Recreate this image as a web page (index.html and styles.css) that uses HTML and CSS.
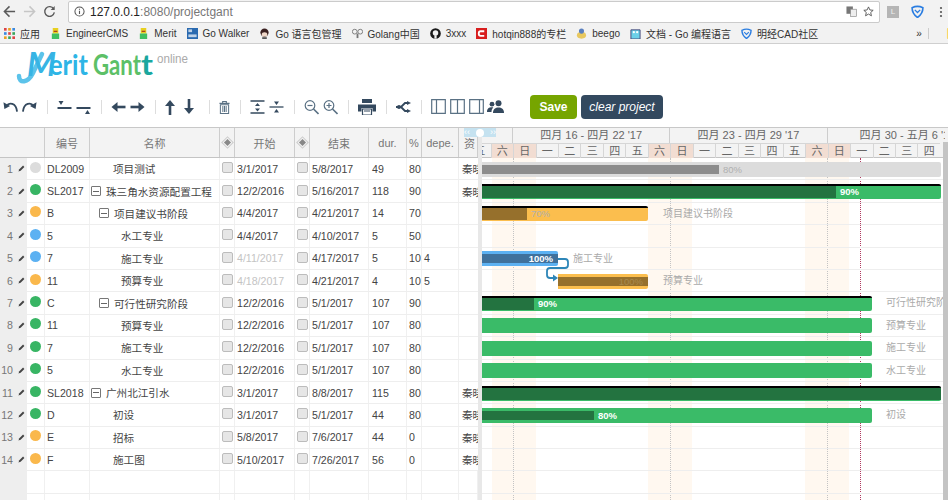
FILE: index.html
```html
<!DOCTYPE html>
<html>
<head>
    <meta charset="utf-8">
    <meta name="viewport" content="width=device-width, initial-scale=1">
    <title>Project Gantt</title>
    <link rel="stylesheet" href="styles.css">
</head>
<body>
    <svg class="sprite">
        <symbol id="pencil" viewBox="0 0 8 8"><path d="M0.5 7.5l1-2.6L5.8 0.7l1.5 1.5L3 6.5z" fill="#444"/></symbol>
    </svg>

    <header class="chrome">
        <div class="nav-bar">
            <svg class="nav-icon" viewBox="0 0 14 14"><path d="M13 7H2M7 1.5L1.5 7 7 12.5" fill="none" stroke="#5a5a5a" stroke-width="1.6"/></svg>
            <svg class="nav-icon" viewBox="0 0 14 14"><path d="M1 7h11M7 1.5L12.5 7 7 12.5" fill="none" stroke="#c6c6c6" stroke-width="1.6"/></svg>
            <svg class="nav-icon" viewBox="0 0 14 14"><path d="M11.5 4.2A5.2 5.2 0 1 0 12.2 8" fill="none" stroke="#5a5a5a" stroke-width="1.5"/><path d="M12.6 1v4.4H8.2z" fill="#5a5a5a"/></svg>
            <div class="omnibox">
                <svg class="info-icon" viewBox="0 0 12 12"><circle cx="6" cy="6" r="5" fill="none" stroke="#555" stroke-width="1.1"/><path d="M6 5.2v3.6M6 3v1.2" stroke="#555" stroke-width="1.2"/></svg>
                <span class="url"><b>127.0.0.1</b>:8080/projectgant</span>
                <svg class="translate-icon" viewBox="0 0 12 12"><rect x="0.5" y="0.5" width="7" height="8" fill="#777"/><rect x="5" y="3.5" width="6.5" height="8" fill="#eee" stroke="#888" stroke-width="0.7"/></svg>
                <svg class="star-icon" viewBox="0 0 12 12"><path d="M6 1l1.5 3.3 3.6.4-2.7 2.4.8 3.6L6 8.8l-3.2 1.9.8-3.6L.9 4.7l3.6-.4z" fill="none" stroke="#555" stroke-width="1"/></svg>
            </div>
            <span class="ext-l">L</span>
            <svg class="ext-shield" viewBox="0 0 12 12"><path d="M1 2.5Q6 0 11 2.5 11 8 6 11.5 1 8 1 2.5z" fill="none" stroke="#2a7de1" stroke-width="1.5"/><path d="M3.5 4.5L6 7l2.5-2.5" fill="none" stroke="#2a7de1" stroke-width="1.2"/></svg>
            <svg class="ext-dots" viewBox="0 0 4 12"><circle cx="2" cy="2" r="1.1" fill="#555"/><circle cx="2" cy="6" r="1.1" fill="#555"/><circle cx="2" cy="10" r="1.1" fill="#555"/></svg>
        </div>
        <nav class="bookmarks">
            <a class="bm bm-apps"><svg viewBox="0 0 10 10"><g fill="#d44"><rect width="2.4" height="2.4"/><rect x="3.8" fill="#e8a020" width="2.4" height="2.4"/><rect x="7.6" fill="#3a8ae0" width="2.4" height="2.4"/><rect y="3.8" fill="#3a8ae0" width="2.4" height="2.4"/><rect x="3.8" y="3.8" width="2.4" height="2.4"/><rect x="7.6" y="3.8" fill="#3aa55a" width="2.4" height="2.4"/><rect y="7.6" fill="#e8a020" width="2.4" height="2.4"/><rect x="3.8" y="7.6" fill="#3aa55a" width="2.4" height="2.4"/><rect x="7.6" y="7.6" width="2.4" height="2.4"/></g></svg>应用</a>
            <a class="bm bm-engineer"><svg viewBox="0 0 10 12"><rect x="2" y="0" width="6" height="6" fill="#e8d020"/><rect x="1" y="6" width="8" height="6" fill="#40c060"/><rect x="3" y="3" width="4" height="1.2" fill="#a03020"/></svg>EngineerCMS</a>
            <a class="bm bm-merit"><svg viewBox="0 0 10 12"><rect x="2" y="0" width="6" height="6" fill="#e8d020"/><rect x="1" y="6" width="8" height="6" fill="#40c060"/><rect x="3" y="3" width="4" height="1.2" fill="#a03020"/></svg>Merit</a>
            <a class="bm bm-walker"><svg viewBox="0 0 12 12"><rect width="12" height="12" fill="#2a6ab0"/><rect x="1.5" y="1.5" width="4" height="3" fill="#fff" opacity=".7"/><rect x="1.5" y="7" width="9" height="3" fill="#fff" opacity=".7"/></svg>Go Walker</a>
            <a class="bm bm-pkg"><svg viewBox="0 0 12 12"><circle cx="6" cy="5" r="4.5" fill="#3a2020"/><ellipse cx="6" cy="7" rx="3" ry="2.4" fill="#f0d8c8"/><rect x="3.5" y="10" width="5" height="2" fill="#555"/></svg>Go 语言包管理</a>
            <a class="bm bm-golang"><svg viewBox="0 0 12 12"><circle cx="3" cy="4" r="2.6" fill="none" stroke="#777"/><circle cx="9" cy="4" r="2.6" fill="none" stroke="#777"/><path d="M6 6v5" stroke="#777" stroke-width="2"/></svg>Golang中国</a>
            <a class="bm bm-gh"><svg viewBox="0 0 12 12"><circle cx="6" cy="6" r="5.8" fill="#1a1a1a"/><circle cx="6" cy="5.4" r="3" fill="#f2f2f2"/><rect x="4.8" y="8" width="2.4" height="3.6" fill="#f2f2f2"/></svg>3xxx</a>
            <a class="bm bm-csdn"><svg viewBox="0 0 12 12"><rect width="12" height="12" fill="#d81e1e"/><path d="M9 3.5H5Q3 3.5 3 6T5 8.5H9" fill="none" stroke="#fff" stroke-width="2"/></svg>hotqin888的专栏</a>
            <a class="bm bm-beego"><svg viewBox="0 0 12 12"><ellipse cx="6" cy="8" rx="5" ry="3.6" fill="#e8c860"/><circle cx="6" cy="3.4" r="2.8" fill="#5a80c0"/></svg>beego</a>
            <a class="bm bm-doc"><svg viewBox="0 0 12 12"><path d="M1 2h10v10H1z" fill="#6cd0e8" stroke="#447"/><circle cx="4.2" cy="4.6" r="1.2" fill="#fff"/><circle cx="7.8" cy="4.6" r="1.2" fill="#fff"/></svg>文档 - Go 编程语言</a>
            <a class="bm bm-cad"><svg viewBox="0 0 12 12"><path d="M1 2.5Q6 0 11 2.5 11 8 6 11.5 1 8 1 2.5z" fill="none" stroke="#2a7de1" stroke-width="1.5"/><path d="M3.5 4.5L6 7l2.5-2.5" fill="none" stroke="#2a7de1" stroke-width="1.2"/></svg>明经CAD社区</a>
            <span class="bm-more">»</span>
            <a class="bm bm-other"><svg viewBox="0 0 10 12"><rect width="10" height="12" rx="1" fill="#f8d868"/></svg>其他书签</a>
        </nav>
    </header>

    <div class="logo">
        <svg viewBox="0 0 180 40" width="180" height="40">
            <path d="M3 30C3 38 12 37 17 27L26 8" fill="none" stroke="#5cc3ea" stroke-width="4.5" stroke-linecap="round"/>
            <text class="logo-m" x="11" y="30">M</text>
            <text class="logo-merit" x="33" y="29" textLength="39" lengthAdjust="spacingAndGlyphs">erit</text>
            <text class="logo-gantt" x="77" y="29" textLength="48" lengthAdjust="spacingAndGlyphs">Gant</text>
            <text class="logo-t" x="125" y="29" textLength="12" lengthAdjust="spacingAndGlyphs">t</text>
            <text class="logo-online" x="141" y="17" textLength="31" lengthAdjust="spacingAndGlyphs">online</text>
        </svg>
    </div>

    <div class="toolbar">
        <svg class="tool" viewBox="0 0 16 16"><path d="M4 7C6 3 14 3 15 13" fill="none" stroke="#34495e" stroke-width="2"/><path d="M0.5 3l1 7 6-3z" fill="#34495e"/></svg>
        <svg class="tool" viewBox="0 0 16 16"><path d="M12 7C10 3 2 3 1 13" fill="none" stroke="#34495e" stroke-width="2"/><path d="M15.5 3l-1 7-6-3z" fill="#34495e"/></svg>
        <span class="sep"></span>
        <svg class="tool" viewBox="0 0 14 16"><path d="M0 9h14" stroke="#34495e" stroke-width="2"/><path d="M1 2h5L3.500 6z" fill="#34495e"/></svg>
        <svg class="tool" viewBox="0 0 14 16"><path d="M0 9h14" stroke="#34495e" stroke-width="2"/><path d="M8.500 15h5L11 11z" fill="#34495e"/></svg>
        <span class="sep"></span>
        <svg class="tool" viewBox="0 0 14 16"><path d="M14 8H5" stroke="#34495e" stroke-width="2.600"/><path d="M6 3L0 8l6 5z" fill="#34495e"/></svg>
        <svg class="tool" viewBox="0 0 14 16"><path d="M0 8h9" stroke="#34495e" stroke-width="2.600"/><path d="M8 3l6 5-6 5z" fill="#34495e"/></svg>
        <span class="sep"></span>
        <svg class="tool tool-v" viewBox="0 0 10 16"><path d="M5 16V6" stroke="#34495e" stroke-width="2.600"/><path d="M0 7l5-6 5 6z" fill="#34495e"/></svg>
        <svg class="tool tool-v" viewBox="0 0 10 16"><path d="M5 0v10" stroke="#34495e" stroke-width="2.600"/><path d="M0 9l5 6 5-6z" fill="#34495e"/></svg>
        <span class="sep"></span>
        <svg class="tool tool-trash" viewBox="0 0 12 14"><path d="M0.500 3h11M4 3V1h4v2" fill="none" stroke="#5a7184" stroke-width="1.200"/><path d="M1.500 4.500h9V14h-9zM4.200 6v6.500M6 6v6.500M7.800 6v6.500" fill="none" stroke="#5a7184" stroke-width="1.100"/></svg>
        <span class="sep"></span>
        <svg class="tool" viewBox="0 0 14 16"><path d="M0 2h14M0 14h14" stroke="#34495e" stroke-width="1.300"/><path d="M4.500 7L7 4l2.500 3zM4.500 9.500L7 12.500 9.500 9.500z" fill="#34495e"/></svg>
        <svg class="tool" viewBox="0 0 14 16"><path d="M0 8h14" stroke="#34495e" stroke-width="1.300"/><path d="M4.500 2.500L7 6 9.500 2.500zM4.500 13.500L7 10l2.500 3.500z" fill="#34495e"/></svg>
        <span class="sep"></span>
        <svg class="tool" viewBox="0 0 15 16"><circle cx="6" cy="6.500" r="4.800" fill="none" stroke="#5a7184" stroke-width="1.200"/><path d="M3.500 6.500h5" stroke="#5a7184" stroke-width="1.200"/><path d="M9.500 10l5 5" stroke="#5a7184" stroke-width="1.600"/></svg>
        <svg class="tool" viewBox="0 0 15 16"><circle cx="6" cy="6.500" r="4.800" fill="none" stroke="#5a7184" stroke-width="1.200"/><path d="M3.500 6.500h5M6 4v5" stroke="#5a7184" stroke-width="1.200"/><path d="M9.500 10l5 5" stroke="#5a7184" stroke-width="1.600"/></svg>
        <span class="sep"></span>
        <svg class="tool tool-print" viewBox="0 0 18 16"><path d="M4 0h10v4H4z" fill="#34495e"/><path d="M0 5.500h18v7h-3.500V9h-11v3.500H0z" fill="#34495e"/><path d="M4.500 10h9v6h-9zM6 12h6" fill="none" stroke="#34495e" stroke-width="1.200"/></svg>
        <span class="sep"></span>
        <svg class="tool tool-link" viewBox="0 0 15 12"><path d="M0 6h5l4-4h3M5 6l4 4h3" fill="none" stroke="#34495e" stroke-width="1.800"/><path d="M11 0l4 2-4 2zM11 8l4 2-4 2z" fill="#34495e"/><circle cx="3" cy="6" r="2" fill="#34495e"/></svg>
        <span class="sep"></span>
        <svg class="tool tool-view" viewBox="0 0 15 15"><path d="M.7.7h13.600v13.600H.700zM5.500.7v13.600" fill="none" stroke="#5a7184" stroke-width="1.200"/></svg>
        <svg class="tool tool-view" viewBox="0 0 15 15"><path d="M.7.7h13.600v13.600H.700zM7.500.7v13.600" fill="none" stroke="#5a7184" stroke-width="1.200"/></svg>
        <svg class="tool tool-view tool-view-last" viewBox="0 0 15 15"><path d="M.7.7h13.600v13.600H.700zM10.500.7v13.600" fill="none" stroke="#5a7184" stroke-width="1.200"/></svg>
        <svg class="tool tool-people" viewBox="0 0 17 13"><circle cx="11.500" cy="3.200" r="3" fill="#34495e"/><path d="M6 13c0-4 2.500-5.500 5.500-5.500S17 9 17 13z" fill="#34495e"/><circle cx="5" cy="4.200" r="2.400" fill="#34495e"/><path d="M0 12c0-3.500 2-4.800 5-4.800 .5 0 1 0 1.300 .2C5 8.500 4.500 10 4.500 12z" fill="#34495e"/></svg>
        <button class="btn btn-save">Save</button>
        <button class="btn btn-clear">clear project</button>
    </div>

    <main class="gantt">
        <section class="grid-panel">
            <div class="grid-row grid-head">
                <div class="cell head-index"></div><div class="cell"></div>
                <div class="cell">编号</div><div class="cell">名称</div><div class="cell"><span class="head-diamond"></span></div>
                <div class="cell">开始</div><div class="cell"><span class="head-diamond"></span></div><div class="cell">结束</div>
                <div class="cell">dur.</div><div class="cell">%</div><div class="cell">depe.</div><div class="cell head-res">资</div>
            </div>

            <div class="grid-row"><div class="cell num"><span>1</span><svg class="pencil"><use href="#pencil"/></svg></div><div class="cell"><i class="dot dot-grey"></i></div><div class="cell code">DL2009</div><div class="cell name ind-2">项目测试</div><div class="cell"><i class="check"></i></div><div class="cell date">3/1/2017</div><div class="cell"><i class="check"></i></div><div class="cell date">5/8/2017</div><div class="cell dur">49</div><div class="cell pct">80</div><div class="cell dep"></div><div class="cell res">秦晓</div></div>
            <div class="grid-row"><div class="cell num"><span>2</span><svg class="pencil"><use href="#pencil"/></svg></div><div class="cell"><i class="dot dot-green"></i></div><div class="cell code">SL2017</div><div class="cell name ind-0"><i class="toggle"></i>珠三角水资源配置工程</div><div class="cell"><i class="check"></i></div><div class="cell date">12/2/2016</div><div class="cell"><i class="check"></i></div><div class="cell date">5/16/2017</div><div class="cell dur">118</div><div class="cell pct">90</div><div class="cell dep"></div><div class="cell res">秦晓</div></div>
            <div class="grid-row"><div class="cell num"><span>3</span><svg class="pencil"><use href="#pencil"/></svg></div><div class="cell"><i class="dot dot-orange"></i></div><div class="cell code">B</div><div class="cell name ind-1"><i class="toggle"></i>项目建议书阶段</div><div class="cell"><i class="check"></i></div><div class="cell date">4/4/2017</div><div class="cell"><i class="check"></i></div><div class="cell date">4/21/2017</div><div class="cell dur">14</div><div class="cell pct">70</div><div class="cell dep"></div><div class="cell res"></div></div>
            <div class="grid-row"><div class="cell num"><span>4</span><svg class="pencil"><use href="#pencil"/></svg></div><div class="cell"><i class="dot dot-blue"></i></div><div class="cell code">5</div><div class="cell name ind-3">水工专业</div><div class="cell"><i class="check"></i></div><div class="cell date">4/4/2017</div><div class="cell"><i class="check"></i></div><div class="cell date">4/10/2017</div><div class="cell dur">5</div><div class="cell pct">50</div><div class="cell dep"></div><div class="cell res"></div></div>
            <div class="grid-row"><div class="cell num"><span>5</span><svg class="pencil"><use href="#pencil"/></svg></div><div class="cell"><i class="dot dot-blue"></i></div><div class="cell code">7</div><div class="cell name ind-3">施工专业</div><div class="cell"><i class="check"></i></div><div class="cell date date-auto">4/11/2017</div><div class="cell"><i class="check"></i></div><div class="cell date">4/17/2017</div><div class="cell dur">5</div><div class="cell pct">10</div><div class="cell dep">4</div><div class="cell res"></div></div>
            <div class="grid-row"><div class="cell num"><span>6</span><svg class="pencil"><use href="#pencil"/></svg></div><div class="cell"><i class="dot dot-orange"></i></div><div class="cell code">11</div><div class="cell name ind-3">预算专业</div><div class="cell"><i class="check"></i></div><div class="cell date date-auto">4/18/2017</div><div class="cell"><i class="check"></i></div><div class="cell date">4/21/2017</div><div class="cell dur">4</div><div class="cell pct">10</div><div class="cell dep">5</div><div class="cell res"></div></div>
            <div class="grid-row"><div class="cell num"><span>7</span><svg class="pencil"><use href="#pencil"/></svg></div><div class="cell"><i class="dot dot-green"></i></div><div class="cell code">C</div><div class="cell name ind-1"><i class="toggle"></i>可行性研究阶段</div><div class="cell"><i class="check"></i></div><div class="cell date">12/2/2016</div><div class="cell"><i class="check"></i></div><div class="cell date">5/1/2017</div><div class="cell dur">107</div><div class="cell pct">90</div><div class="cell dep"></div><div class="cell res"></div></div>
            <div class="grid-row"><div class="cell num"><span>8</span><svg class="pencil"><use href="#pencil"/></svg></div><div class="cell"><i class="dot dot-green"></i></div><div class="cell code">11</div><div class="cell name ind-3">预算专业</div><div class="cell"><i class="check"></i></div><div class="cell date">12/2/2016</div><div class="cell"><i class="check"></i></div><div class="cell date">5/1/2017</div><div class="cell dur">107</div><div class="cell pct">80</div><div class="cell dep"></div><div class="cell res"></div></div>
            <div class="grid-row"><div class="cell num"><span>9</span><svg class="pencil"><use href="#pencil"/></svg></div><div class="cell"><i class="dot dot-green"></i></div><div class="cell code">7</div><div class="cell name ind-3">施工专业</div><div class="cell"><i class="check"></i></div><div class="cell date">12/2/2016</div><div class="cell"><i class="check"></i></div><div class="cell date">5/1/2017</div><div class="cell dur">107</div><div class="cell pct">80</div><div class="cell dep"></div><div class="cell res"></div></div>
            <div class="grid-row"><div class="cell num"><span>10</span><svg class="pencil"><use href="#pencil"/></svg></div><div class="cell"><i class="dot dot-green"></i></div><div class="cell code">5</div><div class="cell name ind-3">水工专业</div><div class="cell"><i class="check"></i></div><div class="cell date">12/2/2016</div><div class="cell"><i class="check"></i></div><div class="cell date">5/1/2017</div><div class="cell dur">107</div><div class="cell pct">80</div><div class="cell dep"></div><div class="cell res"></div></div>
            <div class="grid-row"><div class="cell num"><span>11</span><svg class="pencil"><use href="#pencil"/></svg></div><div class="cell"><i class="dot dot-green"></i></div><div class="cell code">SL2018</div><div class="cell name ind-0"><i class="toggle"></i>广州北江引水</div><div class="cell"><i class="check"></i></div><div class="cell date">3/1/2017</div><div class="cell"><i class="check"></i></div><div class="cell date">8/8/2017</div><div class="cell dur">115</div><div class="cell pct">80</div><div class="cell dep"></div><div class="cell res">秦晓</div></div>
            <div class="grid-row"><div class="cell num"><span>12</span><svg class="pencil"><use href="#pencil"/></svg></div><div class="cell"><i class="dot dot-green"></i></div><div class="cell code">D</div><div class="cell name ind-2">初设</div><div class="cell"><i class="check"></i></div><div class="cell date">3/1/2017</div><div class="cell"><i class="check"></i></div><div class="cell date">5/1/2017</div><div class="cell dur">44</div><div class="cell pct">80</div><div class="cell dep"></div><div class="cell res">秦晓</div></div>
            <div class="grid-row"><div class="cell num"><span>13</span><svg class="pencil"><use href="#pencil"/></svg></div><div class="cell"><i class="dot dot-orange"></i></div><div class="cell code">E</div><div class="cell name ind-2">招标</div><div class="cell"><i class="check"></i></div><div class="cell date">5/8/2017</div><div class="cell"><i class="check"></i></div><div class="cell date">7/6/2017</div><div class="cell dur">44</div><div class="cell pct">0</div><div class="cell dep"></div><div class="cell res">秦晓</div></div>
            <div class="grid-row"><div class="cell num"><span>14</span><svg class="pencil"><use href="#pencil"/></svg></div><div class="cell"><i class="dot dot-orange"></i></div><div class="cell code">F</div><div class="cell name ind-2">施工图</div><div class="cell"><i class="check"></i></div><div class="cell date">5/10/2017</div><div class="cell"><i class="check"></i></div><div class="cell date">7/26/2017</div><div class="cell dur">56</div><div class="cell pct">0</div><div class="cell dep"></div><div class="cell res">秦晓</div></div>
            <div class="grid-row"><div class="cell num"></div><div class="cell"></div><div class="cell"></div><div class="cell"></div><div class="cell"></div><div class="cell"></div><div class="cell"></div><div class="cell"></div><div class="cell"></div><div class="cell"></div><div class="cell"></div><div class="cell"></div></div>
            <div class="grid-row"><div class="cell num"></div><div class="cell"></div><div class="cell"></div><div class="cell"></div><div class="cell"></div><div class="cell"></div><div class="cell"></div><div class="cell"></div><div class="cell"></div><div class="cell"></div><div class="cell"></div><div class="cell"></div></div>
        </section>

        <div class="splitter">
            <div class="split-handle"><span class="split-arrow">‹‹</span><span class="split-knob"></span><span class="split-arrow">››</span></div>
        </div>

        <section class="chart-panel">
            <div class="chart-head">
                <div class="weeks">
                    <div class="week week-cut"></div>
                    <div class="week week-full">四月 16 - 四月 22 '17</div>
                    <div class="week week-full">四月 23 - 四月 29 '17</div>
                    <div class="week week-last">四月 30 - 五月 6 '17</div>
                </div>
                <div class="days">
                    <div class="day">五</div><div class="day day-off">六</div>
                    <div class="day day-off">日</div><div class="day">一</div><div class="day">二</div><div class="day">三</div><div class="day">四</div><div class="day">五</div><div class="day day-off">六</div>
                    <div class="day day-off">日</div><div class="day">一</div><div class="day">二</div><div class="day">三</div><div class="day">四</div><div class="day">五</div><div class="day day-off">六</div>
                    <div class="day day-off">日</div><div class="day">一</div><div class="day">二</div><div class="day">三</div><div class="day">四</div>
                </div>
            </div>
            <div class="chart-body">
                <div class="stripe" style="left:10px"></div>
                <div class="stripe" style="left:166px"></div>
                <div class="stripe" style="left:323px"></div>
                <div class="week-line" style="left:31px"></div>
                <div class="week-line" style="left:188px"></div>
                <div class="week-line" style="left:345px"></div>
                <div class="today-line" style="left:378px"></div>

                <div class="chart-row"><div class="bar bar-grey" style="width:459px"><div class="bar-fill" style="width:237px"></div><span class="bar-pct pct-dim">80%</span></div></div>
                <div class="chart-row"><div class="bar bar-green bar-group" style="width:459px"><div class="bar-fill" style="width:354px"></div><span class="bar-pct">90%</span></div></div>
                <div class="chart-row"><div class="bar bar-orange bar-group" style="width:166px"><div class="bar-fill" style="width:45px"></div><span class="bar-pct pct-dim">70%</span></div><span class="bar-label" style="left:181px">项目建议书阶段</span></div>
                <div class="chart-row"></div>
                <div class="chart-row"><div class="bar bar-blue" style="width:76px"><div class="bar-fill" style="width:76px"><span class="bar-pct pct-in">100%</span></div></div><span class="bar-label" style="left:91px">施工专业</span></div>
                <div class="chart-row"><div class="bar bar-orange" style="left:76px;width:90px"><div class="bar-fill" style="width:90px"><span class="bar-pct pct-in pct-faint">100%</span></div></div><span class="bar-label" style="left:181px">预算专业</span></div>
                <div class="chart-row"><div class="bar bar-green bar-group" style="width:390px"><div class="bar-fill" style="width:52px"></div><span class="bar-pct">90%</span></div><span class="bar-label" style="left:404px">可行性研究阶段</span></div>
                <div class="chart-row"><div class="bar bar-green" style="width:390px"></div><span class="bar-label" style="left:404px">预算专业</span></div>
                <div class="chart-row"><div class="bar bar-green" style="width:390px"></div><span class="bar-label" style="left:404px">施工专业</span></div>
                <div class="chart-row"><div class="bar bar-green" style="width:390px"></div><span class="bar-label" style="left:404px">水工专业</span></div>
                <div class="chart-row"><div class="bar bar-green bar-group" style="width:459px"><div class="bar-fill" style="width:459px"></div></div></div>
                <div class="chart-row"><div class="bar bar-green" style="width:390px"><div class="bar-fill" style="width:112px"></div><span class="bar-pct">80%</span></div><span class="bar-label" style="left:404px">初设</span></div>
                <div class="chart-row"></div>
                <div class="chart-row"></div>
                <div class="chart-row"></div>
                <div class="chart-row"></div>

                <svg class="links" width="466" height="342"><path d="M76 101H83Q86 101 86 104V107Q86 110 83 110H68Q65 110 65 113V117Q65 120 68 120H72" fill="none" stroke="#2e86b8" stroke-width="1.800"/><path d="M71 116.500L76 120 71 123.500z" fill="#2e86b8"/></svg>
            </div>
            <div class="scrollbar"></div>
        </section>
    </main>
</body>
</html>
```

FILE: styles.css
```css
html, body {
    height: 100%;
}
body {
    margin: 0;
    display: flex;
    flex-direction: column;
    overflow: hidden;
    background-color: #fff;
    color: #444;
    font-family: "Liberation Sans", "Noto Sans CJK SC", sans-serif;
}
.sprite {
    display: none;
}

/* browser chrome */
.chrome {
    height: 44px;
    flex: none;
    background-color: #f2f2f2;
    border-bottom: 1px solid #cfcfcf;
    box-sizing: border-box;
}
.nav-bar {
    height: 23px;
    display: flex;
    align-items: center;
    padding-left: 3px;
}
.nav-icon {
    width: 13px;
    height: 13px;
    margin-right: 7px;
    flex: none;
}
.omnibox {
    width: 810px;
    height: 20px;
    margin-left: 5px;
    flex: none;
    display: flex;
    align-items: center;
    background-color: #fff;
    border: 1px solid #cbcbcb;
    border-radius: 2px;
}
.info-icon {
    width: 11px;
    height: 11px;
    margin-left: 5px;
}
.url {
    margin-left: 5px;
    font-size: 12px;
    color: #777;
    flex: 1;
}
.url b {
    font-weight: normal;
    color: #222;
}
.translate-icon {
    width: 11px;
    height: 11px;
    margin-right: 6px;
}
.star-icon {
    width: 11px;
    height: 11px;
    margin-right: 5px;
}
.ext-l {
    width: 12px;
    height: 12px;
    margin-left: 7px;
    background-color: #b5b5b5;
    color: #eee;
    font-size: 8px;
    line-height: 12px;
    text-align: center;
}
.ext-shield {
    width: 13px;
    height: 13px;
    margin-left: 12px;
}
.ext-dots {
    width: 4px;
    height: 12px;
    margin-left: 15px;
}
.bookmarks {
    height: 20px;
    display: flex;
    align-items: center;
    padding-left: 4px;
    font-size: 10px;
    color: #333;
    white-space: nowrap;
}
.bm {
    display: flex;
    align-items: center;
    margin-right: 10px;
}
.bm svg {
    width: 11px;
    height: 11px;
    margin-right: 5px;
    flex: none;
}
.bm-more {
    margin-left: 88px;
    margin-right: 17px;
    padding-right: 6px;
    border-right: 1px solid #ccc;
}

/* logo */
.logo {
    height: 42px;
    flex: none;
    padding: 2px 0 0 16px;
    box-sizing: border-box;
    line-height: 0;
}
.logo-m {
    font: italic bold 33px "Lato", sans-serif;
    fill: #37b4e4;
}
.logo-merit {
    font: bold 28px "Lato", sans-serif;
    fill: #2db5e6;
}
.logo-gantt {
    font: bold 28px "Lato", sans-serif;
    fill: #5cc067;
}
.logo-t {
    font: bold 28px "Lato", sans-serif;
    fill: #1aa79e;
}
.logo-online {
    font: 13px "Liberation Sans", sans-serif;
    fill: #aaa;
}

/* toolbar */
.toolbar {
    height: 41px;
    flex: none;
    display: flex;
    align-items: center;
    padding: 0 0 0 3px;
    box-sizing: border-box;
}
.tool {
    width: 15px;
    height: 16px;
    margin-right: 4px;
    flex: none;
}
.tool-v {
    width: 10px;
    margin-right: 9px;
}
.tool-trash {
    width: 11px;
    height: 14px;
}
.tool-print {
    width: 18px;
}
.tool-link {
    width: 15px;
    height: 12px;
}
.tool-view {
    height: 15px;
}
.tool-view-last {
    margin-right: 3px;
}
.tool-people {
    width: 17px;
    height: 13px;
    margin-right: 26px;
}
.sep {
    width: 1px;
    height: 14px;
    margin: 0 9px 0 6px;
    background-color: #ddd;
    flex: none;
}
.btn {
    height: 24px;
    padding: 0;
    border: none;
    border-radius: 4px;
    color: #fff;
    font-family: inherit;
    font-size: 12px;
}
.btn-save {
    width: 47px;
    margin-right: 4px;
    background-color: #76a500;
    font-weight: bold;
}
.btn-clear {
    width: 82px;
    background-color: #33495f;
    font-style: italic;
}

/* gantt layout */
.gantt {
    flex: 1;
    display: flex;
    min-height: 0;
    overflow: hidden;
    border-top: 1px solid #c8c8c8;
    font-size: 10.6px;
}
.grid-panel {
    width: 478px;
    flex: none;
    overflow: hidden;
}
.grid-row {
    height: 22.4px;
    box-sizing: border-box;
    display: grid;
    grid-template-columns: 27px 18px 45px 130px 15px 60px 15px 59px 38px 15px 37px 19px;
    border-bottom: 1px solid #eee;
}
.cell {
    display: flex;
    align-items: center;
    min-width: 0;
    overflow: hidden;
    white-space: nowrap;
    border-right: 1px solid #f0f0f0;
}
.grid-head {
    height: 30px;
    background-color: #f3f3f3;
    border-bottom: 1px solid #c4c4c4;
    color: #777;
    font-size: 11px;
}
.grid-head .cell {
    justify-content: center;
    border-right: 1px solid #cdcdcd;
}
.grid-head .head-index {
    border-right: none;
}
.head-diamond {
    width: 5px;
    height: 5px;
    background-color: #888;
    outline: 1px solid #ccc;
    outline-offset: 1px;
    transform: rotate(45deg);
}
.head-res {
    padding-left: 3px;
}
.num {
    background-color: #eee;
    color: #777;
    border-right: none;
    justify-content: flex-end;
    padding-right: 2px;
}
.pencil {
    width: 7px;
    height: 7px;
    margin-left: 5px;
}
.dot {
    width: 11px;
    height: 11px;
    margin: -3px 0 0 3px;
    border-radius: 50%;
}
.dot-grey {
    background-color: #dcdcdc;
}
.dot-green {
    background-color: #38b564;
}
.dot-orange {
    background-color: #fab84c;
}
.dot-blue {
    background-color: #5cb1f2;
}
.check {
    width: 9px;
    height: 9px;
    margin: -2px 0 0 2px;
    flex: none;
    background-color: #e6e6e6;
    border: 1px solid #bcbcbc;
    border-radius: 2px;
}
.code, .date, .dur, .pct, .dep, .res {
    padding-left: 2px;
}
.dur {
    padding-left: 3px;
}
.res {
    padding-left: 3px;
    border-right: none;
}
.date-auto {
    color: #c4c4c4;
}
.name {
    color: #444;
}
.ind-0 {
    padding-left: 1px;
}
.ind-1 {
    padding-left: 9px;
}
.ind-2 {
    padding-left: 23px;
}
.ind-3 {
    padding-left: 31px;
}
.toggle {
    position: relative;
    width: 8px;
    height: 8px;
    margin-right: 5px;
    flex: none;
    border: 1px solid #777;
    border-radius: 1px;
}
.toggle::after {
    content: "";
    position: absolute;
    left: 1px;
    right: 1px;
    top: 3.500px;
    height: 1px;
    background-color: #666;
}

/* splitter */
.splitter {
    position: relative;
    width: 4px;
    flex: none;
    background-color: #e8e8e8;
}
.split-handle {
    position: absolute;
    left: -14px;
    top: 0;
    width: 32px;
    height: 9px;
    z-index: 3;
    display: flex;
    align-items: center;
    justify-content: space-between;
    background-color: #c5e2f0;
    color: #fff;
    font-size: 9px;
    line-height: 9px;
}
.split-knob {
    width: 8px;
    height: 8px;
    border-radius: 50%;
    background-color: #fff;
}

/* chart */
.chart-panel {
    position: relative;
    flex: 1;
    min-width: 0;
    overflow: hidden;
}
.chart-head {
    height: 30px;
    box-sizing: border-box;
    background-color: #f3f3f3;
    border-bottom: 1px solid #c4c4c4;
    color: #666;
    font-size: 11px;
}
.weeks {
    height: 15px;
    display: flex;
    white-space: nowrap;
}
.week {
    flex: none;
    box-sizing: border-box;
    text-align: center;
    line-height: 15px;
    border-right: 1px solid #cdcdcd;
    overflow: hidden;
}
.week-cut {
    width: 31px;
}
.week-full {
    width: 157.300px;
}
.week-last {
    width: 117px;
    padding-left: 32px;
    text-align: left;
    border-right: none;
}
.days {
    height: 15px;
    display: flex;
    margin-left: -13.900px;
}
.day {
    width: 22.470px;
    flex: none;
    box-sizing: border-box;
    text-align: center;
    line-height: 14px;
    border-left: 1px solid #d6d6d6;
    border-top: 1px solid #d6d6d6;
}
.day-off {
    background-color: #f2ddd2;
}
.chart-body {
    position: relative;
}
.stripe {
    position: absolute;
    top: 0;
    width: 44px;
    height: 342px;
    background-color: #fff8f0;
}
.week-line {
    position: absolute;
    top: 0;
    height: 342px;
    border-left: 1px dotted #c4c4c4;
}
.today-line {
    position: absolute;
    top: 0;
    height: 342px;
    border-left: 1px dotted #b03a60;
}
.chart-row {
    position: relative;
    height: 22.400px;
    box-sizing: border-box;
    border-bottom: 1px solid #eee;
}
.bar {
    position: absolute;
    left: 0;
    top: 3.600px;
    height: 15px;
    display: flex;
    align-items: center;
    box-sizing: border-box;
    border-radius: 0 2px 2px 0;
    font-size: 9.500px;
}
.bar-fill {
    height: 9px;
    flex: none;
    display: flex;
    align-items: center;
    justify-content: flex-end;
}
.bar-pct {
    margin-left: 4px;
    color: #fff;
    font-weight: bold;
}
.pct-in {
    margin-right: 5px;
}
.pct-dim {
    color: #b0b0b0;
    font-weight: normal;
}
.pct-faint {
    color: #a88a50;
    font-weight: normal;
}
.bar-group {
    border-top: 2px solid #000;
    align-items: flex-start;
}
.bar-group .bar-fill {
    height: 12px;
}
.bar-grey {
    background-color: #dcdcdc;
}
.bar-grey .bar-fill {
    background-color: #8c8c8c;
}
.bar-green {
    background-color: #3abb68;
}
.bar-green .bar-fill {
    background-color: #237340;
}
.bar-orange {
    background-color: #fbbe4e;
}
.bar-orange .bar-fill {
    background-color: #96702c;
}
.bar-blue {
    background-color: #5cb1f2;
}
.bar-blue .bar-fill {
    background-color: #3f719c;
}
.bar-label {
    position: absolute;
    top: 0;
    line-height: 21px;
    color: #aaa;
    font-size: 10px;
    white-space: nowrap;
}
.links {
    position: absolute;
    left: 0;
    top: 0;
}
.scrollbar {
    position: absolute;
    right: 0;
    top: 14px;
    bottom: 0;
    width: 5px;
    background-color: #c4c4c4;
}
```
